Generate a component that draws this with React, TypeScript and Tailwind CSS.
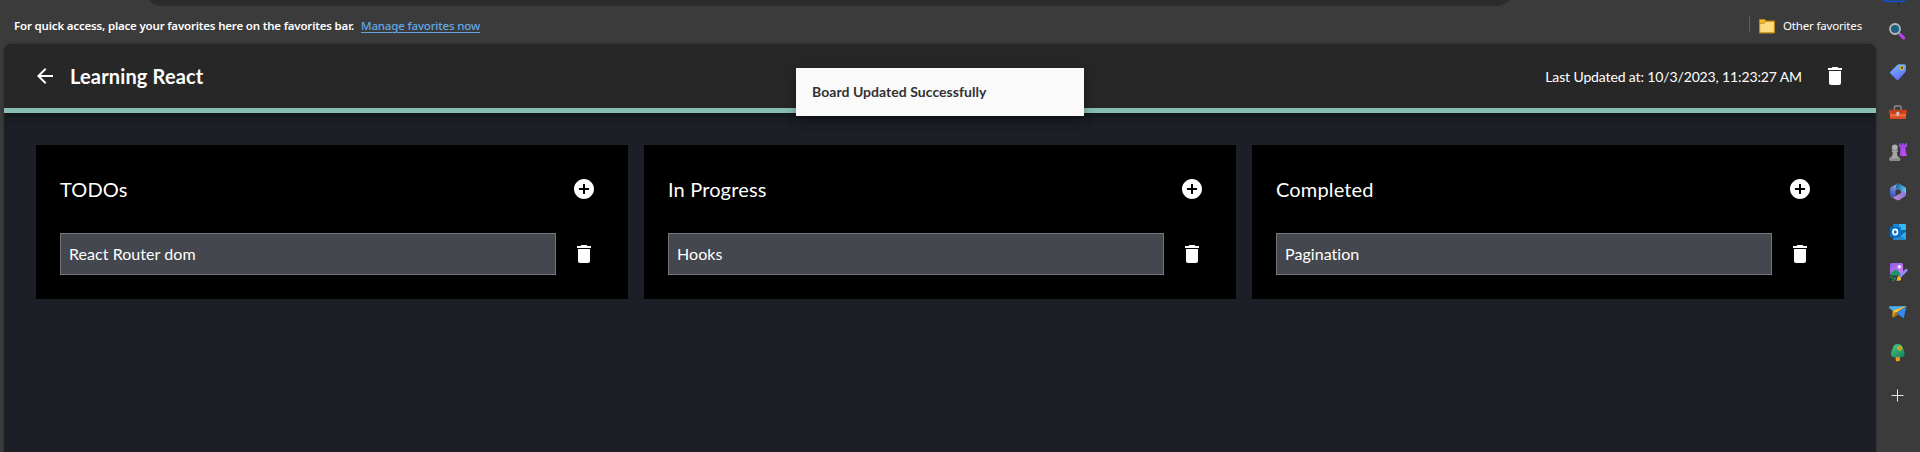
import { MdAddCircle, MdArrowBack, MdDelete } from "react-icons/md";
import type { ReactNode } from "react";

const columns = [
  { title: "TODOs", task: "React Router dom" },
  { title: "In Progress", task: "Hooks" },
  { title: "Completed", task: "Pagination" },
];

function SideIcon({ children }: { children: ReactNode }) {
  return (
    <svg viewBox="0 0 20 20" className="size-5 shrink-0" fill="none">
      {children}
    </svg>
  );
}

function Sidebar() {
  return (
    <aside className="flex w-11 shrink-0 flex-col pl-3">
      <svg viewBox="0 0 24 6" className="-ml-1.5 h-1.5 w-6 shrink-0" fill="none">
        <path d="M1 1.4 5 .6l4 1h10L23 .6" stroke="#1550c8" strokeWidth="1.6" />
        <path d="M16.5 2v4" stroke="#2a2a2a" />
      </svg>
      <div className="mt-4 flex flex-col gap-5">
        <SideIcon>
          <g transform="translate(0 -1)">
            <circle cx="7" cy="8" r="5" fill="#1d6484" stroke="#b9b9b9" strokeWidth="1.8" />
            <path d="m10.8 12 1.4 1.4" stroke="#a0a0a0" strokeWidth="2" />
            <path d="m12.6 13.9 3 3" stroke="#c13df0" strokeWidth="3.2" strokeLinecap="round" />
          </g>
        </SideIcon>
        <SideIcon>
          <defs>
            <linearGradient id="tag" x1="6" y1="4" x2="12" y2="18" gradientUnits="userSpaceOnUse">
              <stop stopColor="#74b2ff" />
              <stop offset="1" stopColor="#6068f2" />
            </linearGradient>
          </defs>
          <path d="M11 2.2h5.5L18 3.6v5l-.8 1.6-6.4 7.2q-1.2 1-2.4 0L2.4 11.6q-.8-1.1.2-2L9.6 2.8Z" fill="url(#tag)" />
          <circle cx="14" cy="5.8" r="1.8" fill="#4b4a55" stroke="#e4bc18" strokeWidth="1.1" />
        </SideIcon>
        <SideIcon>
          <path d="M6.4 8V5.4Q6.4 4 7.6 4h4.2q1.2 0 1.2 1.4V8" stroke="#8d8d8d" strokeWidth="1.4" />
          <path d="M2 11h16v5q0 1-1 1H3q-1 0-1-1Z" fill="#f0623c" />
          <path d="M2 7.7h16q1 0 1 1v3H1v-3q0-1 1-1Z" fill="#c43f18" />
          <path d="M2 14.8h16V16q0 1-1 1H3q-1 0-1-1Z" fill="#d84c22" />
          <rect x="8.4" y="9.7" width="2.8" height="4" rx="1" fill="#c7c7c7" />
        </SideIcon>
        <SideIcon>
          <defs>
            <linearGradient id="rook" x1="11" y1="1" x2="18" y2="14" gradientUnits="userSpaceOnUse">
              <stop stopColor="#8a48e8" />
              <stop offset="1" stopColor="#cc48f4" />
            </linearGradient>
          </defs>
          <path d="M11 1.2h1.7v1.2h1.5V1.2h1.7v1.2h1.5V1.2H19v3.2l-1.6 1.2.4 5 .9 1.5V14h-6.4l-.1-2.2.2-6.2L11 4.4Z" fill="url(#rook)" />
          <circle cx="6.8" cy="5.6" r="3" fill="#adadad" />
          <path d="M3.8 8.2h6v1.7H8.9l.5 4.2 2.7 2.2v1.5q0 .9-1 .9H2.4q-1 0-1-.9v-1.5l2.8-2.2.6-4.2h-1Z" fill="#a5a5a5" />
          <path d="M1.4 16.3h10.9v1.5q0 .9-1 .9H2.4q-1 0-1-.9Z" fill="#8c8c8c" />
        </SideIcon>
        <SideIcon>
          <defs>
            <linearGradient id="m-a" x1="9" y1="2" x2="3" y2="14" gradientUnits="userSpaceOnUse">
              <stop stopColor="#8fa6f0" />
              <stop offset="1" stopColor="#3d50b4" />
            </linearGradient>
            <linearGradient id="m-b" x1="8" y1="4" x2="18" y2="8" gradientUnits="userSpaceOnUse">
              <stop stopColor="#156891" />
              <stop offset="1" stopColor="#65c6fb" />
            </linearGradient>
            <linearGradient id="m-c" x1="5" y1="16" x2="18" y2="10" gradientUnits="userSpaceOnUse">
              <stop stopColor="#c584cf" />
              <stop offset="1" stopColor="#7f78dd" />
            </linearGradient>
          </defs>
          <path d="M9.8 1.4 3.2 5Q2 5.8 2 7.2v5.6q0 1.4 1.2 2.1 2 1.1 3.4.4 1-.6.9-2.2V8.5L10 6.8V1.4Z" fill="url(#m-a)" />
          <path d="M9.3 1.5Q7.9 2.7 8 5.2l.1 1.4 4.6 2 .5 3 3.6 1.5 1.2-2V7.1q0-1.4-1.1-2.1l-5.2-3.2q-1.2-.7-2.4-.3Z" fill="url(#m-b)" />
          <path d="M3.6 15q2.5.8 4-.9l4.6-2.5q1.2-.7 1.2-2.7 5 1.4 4.5 4.1-.2.9-1.2 1.5L11.4 18q-1.3.7-2.7 0Z" fill="url(#m-c)" />
        </SideIcon>
        <SideIcon>
          <path d="M6 2h11q1 0 1 1v14q0 1-1 1H6q-1 0-1-1V3q0-1 1-1Z" fill="#1588d2" />
          <path d="M11 2h6q1 0 1 1v5h-7Z" fill="#35b8f1" />
          <path d="M5 8h13v9q0 1-1 1H6Z" fill="#0f67af" />
          <path d="m18 9.5-7 5 7 3.5Z" fill="#2cabe8" />
          <path d="m5 16.5 8-2.5 5 3.5q-.3.5-1 .5H6q-1 0-1-1.5Z" fill="#2388cf" />
          <rect x="1.9" y="4.7" width="10.8" height="10.6" rx="1" fill="#0870c4" />
          <ellipse cx="7.2" cy="10" rx="2.3" ry="2.6" stroke="#fff" strokeWidth="1.6" />
        </SideIcon>
        <SideIcon>
          <defs>
            <linearGradient id="pic" x1="3" y1="1" x2="13" y2="12" gradientUnits="userSpaceOnUse">
              <stop stopColor="#9158e8" />
              <stop offset="1" stopColor="#cb84f6" />
            </linearGradient>
          </defs>
          <rect x="2" y="1" width="13" height="12" rx="1.5" fill="url(#pic)" />
          <path d="M2.4 11.6 6.4 8q1.4-1 2.8 0l3.4 3.6-1.6 1.9H3.5q-1.1 0-1.1-1.9Z" fill="#209567" />
          <path d="M11.4 3v3.4M9.7 4.7h3.4" stroke="#fff" strokeWidth="1.5" />
          <path d="m18.2 8.2-5.5 5.6" stroke="#8c8cf5" strokeWidth="2.8" strokeLinecap="round" />
          <path d="m10.7 13.7 2.4 2.3q.4 2.4-2 2.7-2 .3-3.1-.4 1.5-.5 1.3-2.2-.1-1.5 1.4-2.4Z" fill="#f3ba2c" />
          <path d="M1.3 15.6q2.2-1.6 3 0t2 .5q1.3-.8 1 .6-.7 1.8-3.3 1.7" stroke="#21835c" strokeWidth="1.3" />
        </SideIcon>
        <SideIcon>
          <path d="M1 5.1q0-.8 1-.8L18.4 4 6 9.3 1.4 6.5Z" fill="#45b3f2" />
          <path d="m4.5 8.6 13.9-4.6L7.9 11l-2.8 4.6q-.7-.1-.7-1Z" fill="#e29b18" />
          <path d="M4.8 8.8 18.4 4l-10 6.6Z" fill="#ffc23a" />
          <path d="M18.4 4 8.5 11l6.3 4.8q.9.4 1.2-.6Z" fill="#338bed" />
          <path d="m8.2 11.2 2 1.5-5.1 3Z" fill="#bb7415" />
        </SideIcon>
        <SideIcon>
          <defs>
            <linearGradient id="tree" x1="5" y1="3" x2="14" y2="15" gradientUnits="userSpaceOnUse">
              <stop stopColor="#49c07a" />
              <stop offset="1" stopColor="#188962" />
            </linearGradient>
          </defs>
          <path d="M7.7 14h4.2v4q0 1.2-1.2 1.2H8.9q-1.2 0-1.2-1.2Z" fill="#f39a12" />
          <path d="M9.8 2q4 0 5.3 4.2L16.6 11q.6 4-3.6 4.3H6.6Q2.5 15 3.1 11l1.5-4.8Q5.8 2 9.8 2Z" fill="url(#tree)" />
          <path d="M11.7 3.7v5.2M9.1 6.3h5.2" stroke="#f2b517" strokeWidth="2" />
          <circle cx="11.7" cy="6.3" r=".9" fill="#c95a18" />
        </SideIcon>
      </div>
      <svg viewBox="0 0 20 20" className="mt-[23px] size-5 shrink-0" fill="none">
        <path d="M9.5 4.5v12M3.5 10.5h12" stroke="#e8e8e8" />
      </svg>
    </aside>
  );
}

function FavoritesBar() {
  return (
    <div className="flex h-[38px] items-center px-[10px] pt-0.5 font-['Noto_Sans',sans-serif] text-[11.5px] leading-4 text-white">
      <span className="w-[347px] whitespace-nowrap font-semibold tracking-[-0.18px]">
        For quick access, place your favorites here on the favorites bar.
      </span>
      <a className="whitespace-nowrap font-medium tracking-[-0.16px] text-[#62a8e5] underline underline-offset-2">Manage favorites now</a>
      <div className="ml-auto flex items-center">
        <span className="-mt-1 h-4 w-px bg-[#5c5c5c]" />
        <svg viewBox="0 0 16 16" className="ml-[9px] size-4" fill="none">
          <path d="M.6 14.3V2.1Q.6 1.5 1.2 1.5h4.4l1.5 1.6h7.6q.7 0 .7.7v10.5q0 .6-.7.6H1.2q-.6 0-.6-.6Z" fill="#ffdb80" stroke="#bd8b12" strokeWidth="1.1" />
          <path d="M1.1 2h4.3l1.2 1.3-1.5 1.5h-4Z" fill="#f3ba25" />
          <path d="M1 5.2h4.3l1.8-2" stroke="#bd8b12" />
        </svg>
        <span className="ml-2 w-[83px] whitespace-nowrap tracking-[-0.17px]">Other favorites</span>
      </div>
    </div>
  );
}

function Column({ title, task }: { title: string; task: string }) {
  return (
    <section className="bg-black p-6">
      <div className="mb-6 flex h-10 items-center justify-between">
        <h2 className="text-[20px] leading-8 tracking-[0.15px]">{title}</h2>
        <button className="flex size-10 items-center justify-center" aria-label="Add task">
          <MdAddCircle className="size-6" />
        </button>
      </div>
      <div className="flex items-center gap-2">
        <div className="flex h-[42px] flex-1 items-center border border-[#74767c] bg-[#45474e] px-2 text-base tracking-[0.05px]">{task}</div>
        <button className="flex size-10 items-center justify-center" aria-label="Delete task">
          <MdDelete className="size-6" />
        </button>
      </div>
    </section>
  );
}

export default function App() {
  return (
    <div className="flex h-[452px] w-[1920px] overflow-hidden bg-[#3b3b3b] font-['Lato',sans-serif] text-white">
      <div className="flex min-w-0 flex-1 flex-col pl-1">
        <div className="flex h-1.5 items-end overflow-hidden">
          <div className="ml-[140px] h-9 w-[1370px] shrink-0 rounded-full bg-[#2b2b2b]" />
        </div>
        <FavoritesBar />
        <main className="relative flex flex-1 flex-col overflow-hidden rounded-t-lg bg-[#1c1f26] shadow-[0_0_3px_rgba(0,0,0,0.35)]">
          <header className="flex h-[69px] shrink-0 items-center border-b-[5px] border-[#8abdb4] bg-[#272727] pl-[21px] pr-[21px] shadow-[0_2px_4px_-1px_rgba(0,0,0,0.2),0_4px_5px_rgba(0,0,0,0.14),0_1px_10px_rgba(0,0,0,0.12)]">
            <button className="flex size-10 items-center justify-center" aria-label="Back">
              <MdArrowBack className="size-6" />
            </button>
            <h1 className="ml-[5px] text-[20px] font-bold leading-8 tracking-[0.15px]">Learning React</h1>
            <p className="ml-auto mr-[13px] text-[14px] tracking-[-0.13px]">Last Updated at: 10/3/2023, 11:23:27 AM</p>
            <button className="flex size-10 items-center justify-center" aria-label="Delete board">
              <MdDelete className="size-6" />
            </button>
          </header>
          <div className="grid grid-cols-3 gap-4 p-8">
            {columns.map((column) => (
              <Column key={column.title} {...column} />
            ))}
          </div>
          <div
            role="status"
            className="absolute left-1/2 top-6 flex h-12 w-72 -translate-x-1/2 items-center bg-[#fafafa] px-4 pb-0.5 text-[14px] font-bold tracking-[0.04px] text-[#323232] shadow-[0_3px_5px_-1px_rgba(0,0,0,0.2),0_6px_10px_rgba(0,0,0,0.14),0_1px_18px_rgba(0,0,0,0.12)]"
          >
            Board Updated Successfully
          </div>
        </main>
      </div>
      <Sidebar />
    </div>
  );
}
